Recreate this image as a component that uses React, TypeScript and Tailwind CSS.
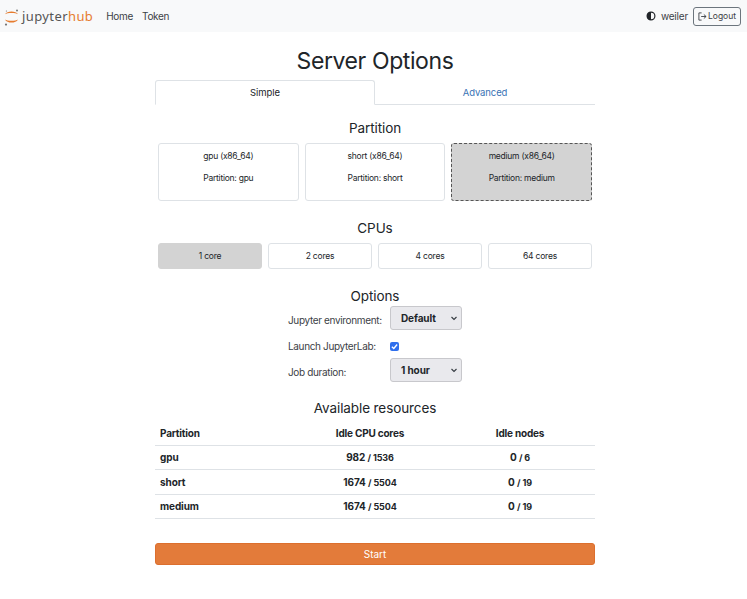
import React from "react";

function Logo() {
  return (
    <svg width="22" height="24" viewBox="0 0 22 24" className="shrink-0">
      <path d="M4 10.2 C6 6.6 15 6.6 17 10.2 C15 8.6 6 8.6 4 10.2 Z" fill="#e67c2f" />
      <path d="M4 15.4 C6 19.6 15 19.6 17 15.4 C15 17.2 6 17.2 4 15.4 Z" fill="#e67c2f" />
      <circle cx="16" cy="6.6" r="1" fill="#767677" />
      <circle cx="5" cy="20.6" r="1.1" fill="#767677" />
      <circle cx="5.4" cy="7" r="0.6" fill="#767677" />
    </svg>
  );
}

function Card({ name, active }: { name: string; active?: boolean }) {
  return (
    <div
      className={
        "flex-1 h-[58px] rounded-[3px] pt-[6px] text-center text-[8.5px] tracking-[-0.25px] leading-[13px] text-[#212529] " +
        (active ? "bg-[#d3d3d3] border border-dashed border-[#555555]" : "bg-white border border-[#dee2e6]")
      }
    >
      <div>{name} (x86_64)</div>
      <div className="mt-[9px]">Partition: {name}</div>
    </div>
  );
}

function Cpu({ label, active }: { label: string; active?: boolean }) {
  return (
    <div
      className={
        "flex-1 h-[26px] rounded-[3px] flex items-center justify-center text-[8.5px] tracking-[-0.2px] text-[#212529] " +
        (active ? "bg-[#d3d3d3] border border-[#d3d3d3]" : "bg-white border border-[#dee2e6]")
      }
    >
      {label}
    </div>
  );
}

function Sel({ value }: { value: string }) {
  return (
    <div className="w-[72px] h-[24px] rounded-[3px] bg-[#e9e9ed] border border-[#c8c8cc] flex items-center justify-between pl-[10px] pr-[3px] text-[10px] font-bold tracking-[-0.1px] text-[#212529]">
      <span>{value}</span>
      <svg width="8" height="8" viewBox="0 0 8 8" fill="none" stroke="#343a40" strokeWidth="1.1">
        <path d="M1.5 3 L4 5.5 L6.5 3" />
      </svg>
    </div>
  );
}

function Row({ name, a, b, c, d }: { name: string; a: string; b: string; c: string; d: string }) {
  return (
    <div className="flex h-[24.4px] items-center border-b border-[#dee2e6] text-[10px] font-bold tracking-[-0.1px] text-[#212529]">
      <div className="w-[140px] pl-[5px]">{name}</div>
      <div className="w-[150px] text-center">
        {a} <span className="text-[9px]">/ {b}</span>
      </div>
      <div className="w-[150px] text-center">
        {c} <span className="text-[9px]">/ {d}</span>
      </div>
    </div>
  );
}

export default function App() {
  return (
    <div className="w-[747px] h-[599px] bg-white font-['Inter',sans-serif] overflow-hidden">
      <div className="h-[32px] bg-[#f8f9fa] flex items-center pl-[1px] pr-[6px]">
        <Logo />
        <span className="ml-[-1px] text-[13px] leading-none tracking-[0.4px] text-[#555555] font-['Noto_Sans',sans-serif]">
          jupyter<span className="text-[#e67c2f]">hub</span>
        </span>
        <span className="ml-[13px] text-[10px] tracking-[-0.3px] text-[#3c4146]">Home</span>
        <span className="ml-[9px] text-[10px] tracking-[-0.3px] text-[#3c4146]">Token</span>
        <div className="ml-auto flex items-center">
          <svg width="10" height="10" viewBox="0 0 10 10">
            <circle cx="5" cy="5" r="3.9" fill="none" stroke="#212529" strokeWidth="1.2" />
            <path d="M5 1 A4 4 0 0 0 5 9 Z" fill="#212529" />
          </svg>
          <span className="ml-[5px] text-[10px] tracking-[-0.2px] text-[#3c4146]">weiler</span>
          <div className="ml-[5px] w-[48px] h-[19px] rounded-[3px] border border-[#6c757d] flex items-center justify-center text-[8.5px] text-[#3c4146]">
            <svg width="9" height="9" viewBox="0 0 10 10" fill="none" stroke="#3c4146" strokeWidth="1" className="mr-[1px]">
              <path d="M4 1 H1 V9 H4 M3.5 5 H9 M6.5 2.8 L9 5 L6.5 7.2" />
            </svg>
            Logout
          </div>
        </div>
      </div>

      <div className="w-[440px] ml-[155px]">
        <h1 className="h-[48px] pt-[10px] flex items-center justify-center text-[23px] tracking-[-0.4px] text-[#212529] font-normal">Server Options</h1>

        <div className="flex h-[25px] text-[9.5px] tracking-[-0.1px] border-b border-[#dee2e6]">
          <div className="w-[220px] h-[25px] pt-[1px] rounded-t-[3px] border border-b-white border-[#dee2e6] bg-white flex items-center justify-center text-[#212529]">
            Simple
          </div>
          <div className="w-[220px] pt-[2px] flex items-center justify-center text-[#3a73b5]">Advanced</div>
        </div>

        <h2 className="mt-[13px] text-center text-[13.5px] tracking-[-0.1px] leading-[20px] text-[#212529]">Partition</h2>
        <div className="mt-[5px] mx-[3px] flex gap-[6px]">
          <Card name="gpu" />
          <Card name="short" />
          <Card name="medium" active />
        </div>

        <h2 className="mt-[17px] text-center text-[13.5px] tracking-[-0.1px] leading-[20px] text-[#212529]">CPUs</h2>
        <div className="mt-[5px] mx-[3px] flex gap-[6px]">
          <Cpu label="1 core" active />
          <Cpu label="2 cores" />
          <Cpu label="4 cores" />
          <Cpu label="64 cores" />
        </div>

        <h2 className="mt-[17px] text-center text-[13.5px] tracking-[-0.1px] leading-[20px] text-[#212529]">Options</h2>
        <div className="ml-[133px] text-[10px] tracking-[-0.35px] text-[#3c4146]">
          <div className="flex items-center h-[24px]">
            <span className="w-[102px] pt-[4px]">Jupyter environment:</span>
            <Sel value="Default" />
          </div>
          <div className="flex items-center h-[28px]">
            <span className="w-[102px] pt-[4px]">Launch JupyterLab:</span>
            <div className="mt-[4px] w-[9px] h-[9px] rounded-[2px] bg-[#2f6fed] flex items-center justify-center">
              <svg width="7" height="7" viewBox="0 0 8 8" fill="none" stroke="white" strokeWidth="1.6">
                <path d="M1 4.2 L3.2 6.2 L7 1.8" />
              </svg>
            </div>
          </div>
          <div className="flex items-center h-[24px]">
            <span className="w-[102px] pt-[4px]">Job duration:</span>
            <Sel value="1 hour" />
          </div>
        </div>

        <h2 className="mt-[16px] text-center text-[13.5px] tracking-[-0.1px] leading-[20px] text-[#212529]">Available resources</h2>
        <div className="mt-[2px]">
          <div className="flex h-[26px] pt-[1px] items-center border-b border-[#dee2e6] text-[10px] font-bold tracking-[-0.2px] text-[#212529]">
            <div className="w-[140px] pl-[5px]">Partition</div>
            <div className="w-[150px] text-center">Idle CPU cores</div>
            <div className="w-[150px] text-center">Idle nodes</div>
          </div>
          <Row name="gpu" a="982" b="1536" c="0" d="6" />
          <Row name="short" a="1674" b="5504" c="0" d="19" />
          <Row name="medium" a="1674" b="5504" c="0" d="19" />
        </div>

        <div className="mt-[24px] h-[22px] rounded-[3px] bg-[#e37b3a] border border-[#dc6f2e] flex items-center justify-center text-[10px] text-white">
          Start
        </div>
      </div>
    </div>
  );
}
